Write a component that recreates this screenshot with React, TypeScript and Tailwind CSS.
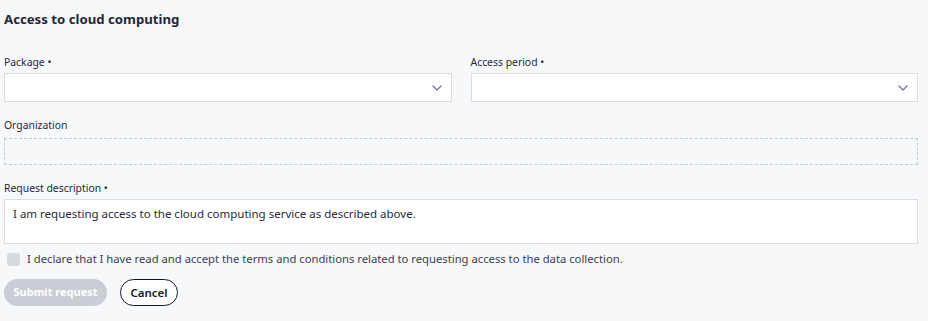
import React from "react";

function Chevron() {
  return (
    <svg width="10" height="6" viewBox="0 0 10 6" fill="none" className="shrink-0">
      <path d="M1 1l4 4 4-4" stroke="#6b7896" strokeWidth="1.3" strokeLinecap="round" strokeLinejoin="round" />
    </svg>
  );
}

function Select({ label }: { label: string }) {
  return (
    <div className="flex flex-col">
      <div className="text-[10.4px] leading-[16px] text-[#1f2937]">{label} •</div>
      <div className="mt-[3px] flex h-[29px] items-center justify-end border border-[#d9dce1] bg-white pr-[9px]">
        <Chevron />
      </div>
    </div>
  );
}

export default function App() {
  return (
    <div className="min-h-screen bg-[#f7f8fa] pl-[4px] pr-[10px] pt-[10px] font-['Noto_Sans',sans-serif] text-[#1f2937]">
      <h2 className="text-[13.2px] font-bold leading-[18px] text-[#1e293b]">Access to cloud computing</h2>
      <div className="mt-[26px] grid grid-cols-2 gap-x-[19px]">
        <Select label="Package" />
        <Select label="Access period" />
      </div>
      <div className="mt-[15px] text-[10.4px] leading-[16px]">Organization</div>
      <div className="mt-[5px] h-[27px] border border-dashed border-[#c5c9d2]" />
      <div className="mt-[15px] text-[10.4px] leading-[16px]">Request description •</div>
      <div className="mt-[3px] h-[45px] border border-[#d9dce1] bg-white px-[8px] pt-[5px] text-[11.5px] leading-[18px] text-[#1f2937]">
        I am requesting access to the cloud computing service as described above.
      </div>
      <div className="mt-[7px] flex items-center gap-[7px] pl-[3px]">
        <div className="h-[13px] w-[13px] rounded-[3px] bg-[#d7dadf]" />
        <span className="text-[11.25px] leading-[16px] text-[#374151]">
          I declare that I have read and accept the terms and conditions related to requesting access to the data collection.
        </span>
      </div>
      <div className="mt-[12px] flex items-center gap-[13px]">
        <button className="h-[27px] w-[103px] rounded-full bg-[#c9ced4] text-[11px] font-bold text-white">Submit request</button>
        <button className="h-[27px] w-[58px] rounded-full border border-[#111827] bg-white text-[11.5px] font-semibold text-[#111827]">Cancel</button>
      </div>
    </div>
  );
}
